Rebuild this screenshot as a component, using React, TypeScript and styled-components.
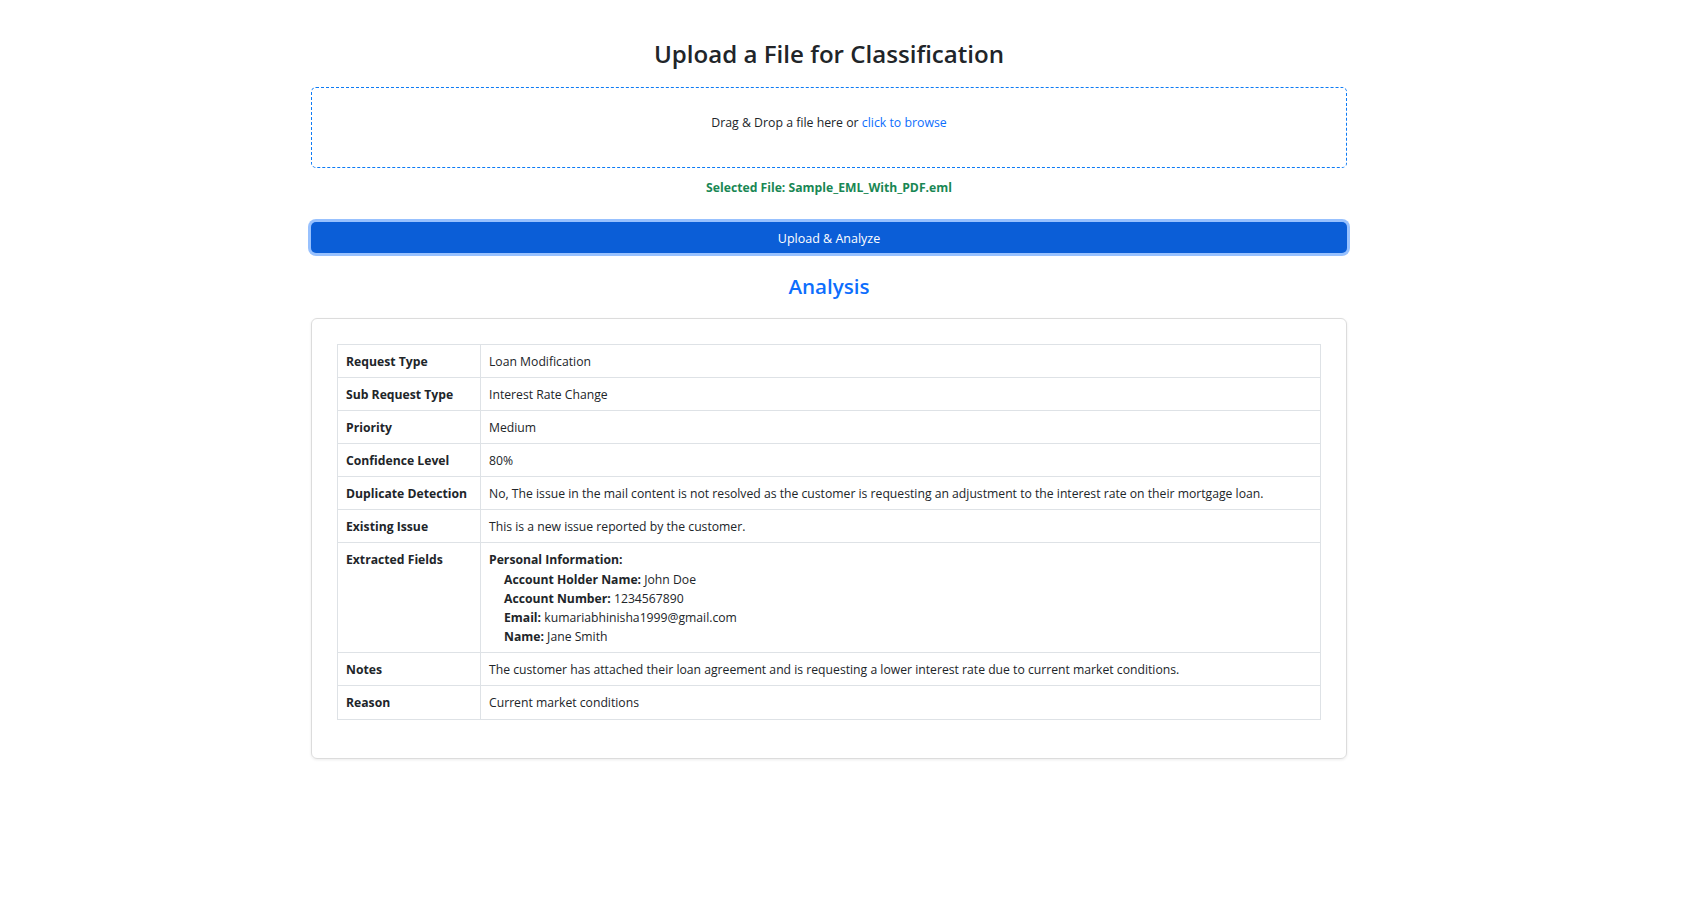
import styled, { createGlobalStyle } from "styled-components";

const GlobalStyle = createGlobalStyle`
  * {
    box-sizing: border-box;
  }
  body {
    margin: 0;
    background: #ffffff;
    color: #212529;
    font-family: "Open Sans", "Noto Sans", "Liberation Sans", sans-serif;
  }
`;

const Page = styled.div`
  display: flex;
  flex-direction: column;
  align-items: center;
  padding: 0 31px 40px 0;
`;

const Container = styled.div`
  width: 1036px;
  display: flex;
  flex-direction: column;
  align-items: stretch;
`;

const Title = styled.h2`
  margin: 39.5px 0 0;
  font-size: 24.1px;
  line-height: 1.2;
  font-weight: 600;
  text-align: center;
  color: #212529;
`;

const DropZone = styled.div`
  margin-top: 18.7px;
  height: 81px;
  padding: 24px 20px 0;
  border: 1px dashed #0d7bf5;
  border-radius: 5px;
  text-align: center;
  font-size: 12.3px;
  line-height: 21px;
  cursor: pointer;
`;

const BrowseLink = styled.span`
  color: #0d6efd;
`;

const SelectedFile = styled.p`
  margin: 9px 0 0;
  text-align: center;
  font-size: 12.2px;
  line-height: 21px;
  font-weight: 700;
  color: #198754;
`;

const UploadButton = styled.button`
  margin-top: 24px;
  height: 31px;
  width: 100%;
  padding-top: 2px;
  border: none;
  border-radius: 5px;
  background: #0b5ed7;
  color: #ffffff;
  font-family: inherit;
  font-size: 12.5px;
  box-shadow: 0 0 0 3px #98c1fe;
  cursor: pointer;
`;

const SectionTitle = styled.h3`
  margin: 20.9px 0 0;
  font-size: 20.6px;
  line-height: 1.2;
  font-weight: 600;
  text-align: center;
  color: #0d6efd;
`;

const Card = styled.div`
  margin-top: 18.9px;
  padding: 25.5px 25px 38px;
  border: 1px solid #dcdcdc;
  border-radius: 6px;
  box-shadow: 0 1px 3px rgba(0, 0, 0, 0.08);
`;

const Table = styled.table`
  width: 100%;
  border-collapse: collapse;
  font-size: 12.2px;
  line-height: 19.25px;
`;

const LabelCell = styled.th`
  width: 143px;
  padding: 7px 8px 5.8px;
  border: 1px solid #dee2e6;
  text-align: left;
  vertical-align: top;
  font-weight: 700;
`;

const ValueCell = styled.td`
  padding: 7px 8px 5.8px;
  border: 1px solid #dee2e6;
  vertical-align: top;
`;

const FieldGroup = styled.div`
  font-weight: 700;
`;

const FieldList = styled.div`
  padding-left: 15px;
`;

const Field = styled.div``;

const FieldKey = styled.strong`
  font-weight: 700;
`;

const rows: [string, string][] = [
  ["Request Type", "Loan Modification"],
  ["Sub Request Type", "Interest Rate Change"],
  ["Priority", "Medium"],
  ["Confidence Level", "80%"],
  [
    "Duplicate Detection",
    "No, The issue in the mail content is not resolved as the customer is requesting an adjustment to the interest rate on their mortgage loan.",
  ],
  ["Existing Issue", "This is a new issue reported by the customer."],
];

const personal: [string, string][] = [
  ["Account Holder Name", "John Doe"],
  ["Account Number", "1234567890"],
  ["Email", "kumariabhinisha1999@gmail.com"],
  ["Name", "Jane Smith"],
];

const tail: [string, string][] = [
  [
    "Notes",
    "The customer has attached their loan agreement and is requesting a lower interest rate due to current market conditions.",
  ],
  ["Reason", "Current market conditions"],
];

export default function App() {
  return (
    <>
      <GlobalStyle />
      <Page>
        <Container>
          <Title>Upload a File for Classification</Title>
          <DropZone>
            Drag &amp; Drop a file here or <BrowseLink>click to browse</BrowseLink>
          </DropZone>
          <SelectedFile>Selected File: Sample_EML_With_PDF.eml</SelectedFile>
          <UploadButton>Upload &amp; Analyze</UploadButton>
          <SectionTitle>Analysis</SectionTitle>
          <Card>
            <Table>
              <tbody>
                {rows.map(([label, value]) => (
                  <tr key={label}>
                    <LabelCell>{label}</LabelCell>
                    <ValueCell>{value}</ValueCell>
                  </tr>
                ))}
                <tr>
                  <LabelCell>Extracted Fields</LabelCell>
                  <ValueCell>
                    <FieldGroup>Personal Information:</FieldGroup>
                    <FieldList>
                      {personal.map(([k, v]) => (
                        <Field key={k}>
                          <FieldKey>{k}:</FieldKey> {v}
                        </Field>
                      ))}
                    </FieldList>
                  </ValueCell>
                </tr>
                {tail.map(([label, value]) => (
                  <tr key={label}>
                    <LabelCell>{label}</LabelCell>
                    <ValueCell>{value}</ValueCell>
                  </tr>
                ))}
              </tbody>
            </Table>
          </Card>
        </Container>
      </Page>
    </>
  );
}
